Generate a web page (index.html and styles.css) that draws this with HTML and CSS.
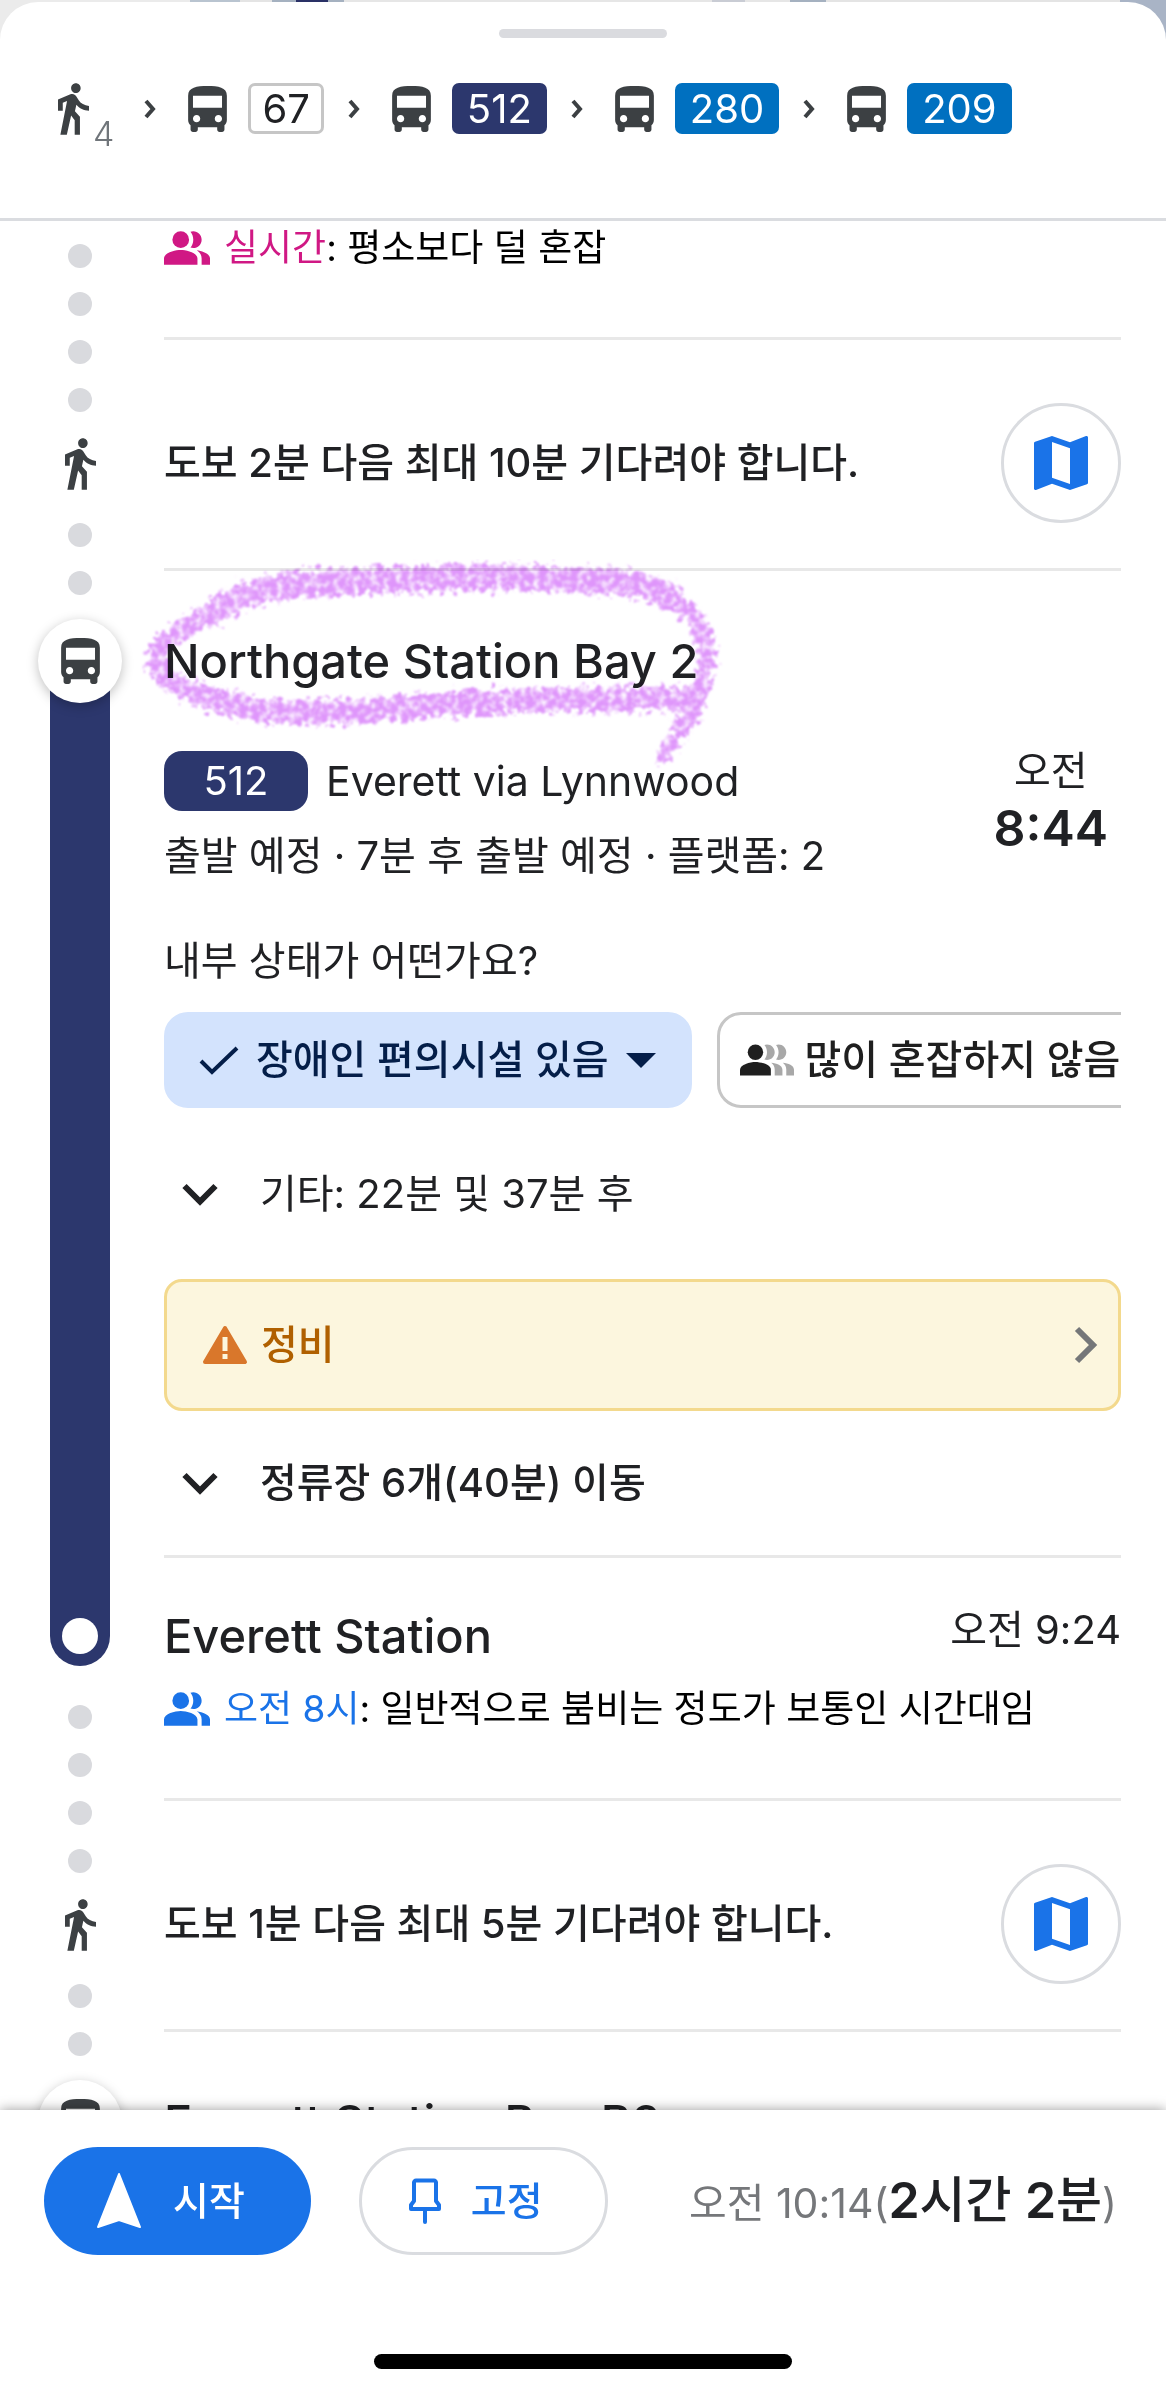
FILE: index.html
```html
<!DOCTYPE html>
<html lang="ko">
<head>
<meta charset="utf-8">
<meta name="viewport" content="width=device-width, initial-scale=1">
<title>대중교통 경로</title>
<link rel="stylesheet" href="styles.css">
</head>
<body>
<svg class="defs" aria-hidden="true">
  <symbol id="walk" viewBox="6 1.5 13 21.5"><path d="M13.5 5.5c1.1 0 2-.9 2-2s-.9-2-2-2-2 .9-2 2 .9 2 2 2zM9.8 8.9L7 23h2.7l1.8-8 1.5 2v6h2.2v-7.5l-2.1-2.3.6-2.7C15 12 16.8 13 19 13v-2c-1.9-.3-3.5-1-4.3-2.4l-1-1.6c-.4-.6-1-1-1.7-1-.3 0-.5.1-.8.1L6 8.3V13h2V9.6l1.8-.7"/></symbol>
  <symbol id="bus" viewBox="4 2 16 19"><path d="M4 16c0 .88.39 1.67 1 2.22V20c0 .55.45 1 1 1h1c.55 0 1-.45 1-1v-1h8v1c0 .55.45 1 1 1h1c.55 0 1-.45 1-1v-1.78c.61-.55 1-1.34 1-2.22V6c0-3.5-3.58-4-8-4s-8 .5-8 4v10zm3.5 1c-.83 0-1.5-.67-1.5-1.5S6.67 14 7.5 14s1.5.67 1.5 1.5S8.33 17 7.5 17zm9 0c-.83 0-1.5-.67-1.5-1.5s.67-1.5 1.5-1.5 1.5.67 1.5 1.5-.67 1.5-1.5 1.5zm1.5-6H6V6h12v5z"/></symbol>
  <symbol id="next" viewBox="0 0 12 20"><path d="M2 2l7 8-7 8" fill="none" stroke="currentColor" stroke-width="4"/></symbol>
  <symbol id="down" viewBox="0 0 36 24"><path d="M2.500 4L18 19.500 33.500 4" fill="none" stroke="currentColor" stroke-width="6"/></symbol>
  <symbol id="map" viewBox="3 3 18 18"><path d="M20.5 3l-.16.03L15 5.1 9 3 3.36 4.9c-.21.07-.36.25-.36.48V20.500c0 .28.22.5.5.5l.16-.03L9 18.900l6 2.100 5.640-1.900c.21-.07.36-.25.36-.48V3.500c0-.28-.22-.5-.5-.5zM15 19l-6-2.110V5l6 2.110V19z"/></symbol>
  <symbol id="people" viewBox="1 4 22 16"><circle cx="9" cy="8" r="4"/><path d="M9 13c-2.670 0-8 1.340-8 4v3h16v-3c0-2.660-5.330-4-8-4zM16.670 13.130C18.040 14.060 19 15.320 19 17v3h4v-3c0-2.180-3.570-3.470-6.330-3.870zM15 12c2.210 0 4-1.790 4-4s-1.790-4-4-4c-.47 0-.91.1-1.330.24C14.500 5.270 15 6.580 15 8s-.5 2.730-1.330 3.760c.42.14.86.24 1.330.24z"/></symbol>
</svg>

<div class="sheet">
  <header class="summary">
    <div class="handle"></div>
    <ol class="modes">
      <li class="mode"><svg class="icon-walk"><use href="#walk"/></svg><span class="minutes">4</span></li>
      <li class="mode"><svg class="icon-next"><use href="#next"/></svg><svg class="icon-bus"><use href="#bus"/></svg><span class="line outline">67</span></li>
      <li class="mode"><svg class="icon-next"><use href="#next"/></svg><svg class="icon-bus"><use href="#bus"/></svg><span class="line navy">512</span></li>
      <li class="mode"><svg class="icon-next"><use href="#next"/></svg><svg class="icon-bus"><use href="#bus"/></svg><span class="line blue">280</span></li>
      <li class="mode"><svg class="icon-next"><use href="#next"/></svg><svg class="icon-bus"><use href="#bus"/></svg><span class="line blue">209</span></li>
    </ol>
  </header>

  <main class="trip">
    <section class="leg walk-leg">
      <div class="rail dotted">
        <i class="dot"></i><i class="dot"></i><i class="dot"></i><i class="dot"></i>
        <svg class="icon-walk"><use href="#walk"/></svg>
        <i class="dot"></i><i class="dot"></i>
      </div>
      <div class="details">
        <p class="crowding"><svg class="icon-people live"><use href="#people"/></svg><span><span class="live">실시간</span>: 평소보다 덜 혼잡</span></p>
        <div class="walk-row">
          <p class="strong">도보 2분 다음 최대 10분 기다려야 합니다.</p>
          <button class="map-button" aria-label="지도"><svg class="icon-map"><use href="#map"/></svg></button>
        </div>
      </div>
    </section>

    <section class="leg">
      <div class="rail">
        <div class="stop-badge"><svg class="icon-bus"><use href="#bus"/></svg></div>
        <div class="track"><i class="track-end"></i></div>
      </div>
      <div class="details">
        <h2 class="stop departure-stop">Northgate Station Bay 2
          <svg class="scribble" viewBox="0 0 600 230" aria-hidden="true">
            <filter id="crayon" x="-5%" y="-10%" width="110%" height="120%">
              <feTurbulence type="fractalNoise" baseFrequency="0.16" numOctaves="3" seed="4" result="noise"/>
              <feDisplacementMap in="SourceGraphic" in2="noise" scale="22" xChannelSelector="R" yChannelSelector="G" result="rough"/>
              <feColorMatrix in="noise" type="matrix" values="0 0 0 0 0  0 0 0 0 0  0 0 0 0 0  0 0 0 -2.400 2" result="grain"/>
              <feComposite in="rough" in2="grain" operator="in"/>
              <feGaussianBlur stdDeviation="1"/>
            </filter>
            <g filter="url(#crayon)" fill="none" stroke="#df95fb" stroke-linecap="round" stroke-linejoin="round">
              <path stroke-width="20" d="M78 60C45 78 20 90 17 106C15 124 30 132 54 142"/>
              <path stroke-width="26" d="M78 60C105 40 150 34 199 32S340 25 393 28S500 28 528 46"/>
              <path stroke-width="18" d="M528 46C555 62 565 80 566 102C567 132 554 160 541 178"/>
              <path stroke-width="14" d="M541 178C534 190 528 198 524 207"/>
              <path stroke-width="24" d="M54 142C100 162 150 164 199 162S340 150 417 150S500 148 546 148"/>
            </g>
          </svg>
        </h2>
        <div class="departure">
          <div class="service">
            <p class="route"><span class="route-badge">512</span>Everett via Lynnwood</p>
            <p class="status">출발 예정 · 7분 후 출발 예정 · 플랫폼: 2</p>
          </div>
          <p class="time">오전<strong>8:44</strong></p>
        </div>
        <p class="question">내부 상태가 어떤가요?</p>
        <div class="chips">
          <button class="chip selected">
            <svg class="icon-check" viewBox="0 0 40 30"><path d="M2 16l11 11L38 3" fill="none" stroke="currentColor" stroke-width="4"/></svg>
            장애인 편의시설 있음
            <svg class="icon-caret" viewBox="0 0 30 15"><path d="M0 0h30L15 15z"/></svg>
          </button>
          <button class="chip">
            <svg class="icon-crowd" viewBox="1 4 28 16"><circle cx="9" cy="8" r="4"/><path d="M9 13c-2.670 0-8 1.340-8 4v3h16v-3c0-2.660-5.330-4-8-4z"/><g fill="#a8a8a8"><path id="behind" d="M17.200 13.400C18.400 14.300 19 15.500 19 17v3h4v-3c0-2.200-3-3.400-5.800-3.600zM15 12c2.210 0 4-1.790 4-4s-1.790-4-4-4c-.47 0-.91.1-1.330.24C14.500 5.270 15 6.580 15 8s-.5 2.730-1.330 3.760c.42.14.86.24 1.330.24z"/><use href="#behind" x="6"/></g></svg>
            많이 혼잡하지 않음
          </button>
        </div>
        <button class="expand others"><svg class="icon-down"><use href="#down"/></svg>기타: 22분 및 37분 후</button>
        <button class="alert">
          <svg class="icon-warning" viewBox="0 0 46 40"><path d="M23 3L43 37H3z" fill="#d9772b" stroke="#d9772b" stroke-width="4" stroke-linejoin="round"/><path d="M23 12v14M23 29v5" stroke="#fcf6de" stroke-width="5"/></svg>
          정비
          <svg class="icon-forward" viewBox="0 0 24 38"><path d="M3 3l16 16L3 35" fill="none" stroke="currentColor" stroke-width="6"/></svg>
        </button>
        <button class="expand stops strong"><svg class="icon-down"><use href="#down"/></svg>정류장 6개(40분) 이동</button>
        <div class="arrival">
          <h2 class="stop">Everett Station</h2>
          <p class="arrival-time">오전 9:24</p>
        </div>
      </div>
    </section>

    <section class="leg walk-leg">
      <div class="rail dotted">
        <i class="dot"></i><i class="dot"></i><i class="dot"></i><i class="dot"></i>
        <svg class="icon-walk"><use href="#walk"/></svg>
        <i class="dot"></i><i class="dot"></i>
      </div>
      <div class="details">
        <p class="crowding"><svg class="icon-people usual"><use href="#people"/></svg><span><span class="usual">오전 8시</span>: 일반적으로 붐비는 정도가 보통인 시간대임</span></p>
        <div class="walk-row">
          <p class="strong">도보 1분 다음 최대 5분 기다려야 합니다.</p>
          <button class="map-button" aria-label="지도"><svg class="icon-map"><use href="#map"/></svg></button>
        </div>
      </div>
    </section>

    <section class="leg">
      <div class="rail">
        <div class="stop-badge"><svg class="icon-bus"><use href="#bus"/></svg></div>
      </div>
      <div class="details"><h2 class="stop departure-stop">Everett Station Bay B2</h2></div>
    </section>
  </main>

  <footer class="actions">
    <div class="action-row">
      <button class="pill start"><svg class="icon-nav" viewBox="0 0 46 58"><path d="M23 2L44 55 23 48 2 55z" stroke="currentColor" stroke-width="2" stroke-linejoin="round"/></svg>시작</button>
      <button class="pill pin"><svg class="icon-pin" viewBox="0 0 32 46"><path d="M7 2.500h18c1 0 2 1 2 2V23l3 4v4H2v-4l3-4V4.500c0-1 1-2 2-2zM16 31v13" fill="none" stroke="currentColor" stroke-width="4" stroke-linejoin="round" stroke-linecap="round"/></svg>고정</button>
      <p class="eta">오전 10:14(<strong><b>2</b>시간 <b>2</b>분</strong>)</p>
    </div>
    <div class="home-indicator"></div>
  </footer>
</div>
</body>
</html>
```
FILE: styles.css
```css
* {
  box-sizing: border-box;
}

body {
  margin: 0;
  background:
    linear-gradient(to right, #ebebeb 190px, #b9c4d0 190px 240px, #e4e4e4 240px 272px, #a5b1c0 272px 296px, #2a3166 296px 328px, #a5b1c0 328px 344px, #e6e6e6 344px 712px, #c9ccd4 712px 745px, #e6e6e6 745px 790px, #a5b1c0 790px 826px, #e4e4e4 826px 1120px, #a9b4c6 1120px);
  color: #202124;
  font-family: Inter, "Noto Sans CJK KR", sans-serif;
  font-size: 40px;
  line-height: 60px;
}

h2,
p,
ol {
  margin: 0;
  padding: 0;
}

button {
  margin: 0;
  padding: 0;
  border: 0;
  background: none;
  color: inherit;
  font: inherit;
  text-align: left;
  display: flex;
  align-items: center;
}

svg {
  display: block;
  flex: none;
  fill: currentColor;
}

.defs {
  position: absolute;
  width: 0;
  height: 0;
}

.icon-walk { width: 31px; height: 52px; color: #3c4043; }
.icon-bus { width: 39px; height: 46px; color: #3c4043; }
.icon-next { width: 12px; height: 20px; color: #3c4043; }
.icon-down { width: 36px; height: 24px; }
.icon-people { width: 46px; height: 36px; }
.icon-map { width: 54px; height: 54px; }
.icon-check { width: 40px; height: 30px; }
.icon-caret { width: 30px; height: 15px; }
.icon-crowd { width: 54px; height: 32px; }
.icon-warning { width: 46px; height: 40px; }
.icon-forward { width: 24px; height: 38px; color: #757779; }
.icon-nav { width: 46px; height: 58px; }
.icon-pin { width: 32px; height: 46px; }

.sheet {
  height: 100vh;
  display: flex;
  flex-direction: column;
  overflow: hidden;
  padding-top: 2px;
}

.summary {
  flex: none;
  padding: 27px 0 84px;
  border-bottom: 3px solid #dadce0;
  border-radius: 38px 38px 0 0;
  background: #fff;
}

.handle {
  width: 168px;
  height: 9px;
  margin: 0 auto 45px;
  border-radius: 5px;
  background: #dadbdf;
}

.modes {
  display: flex;
  padding-left: 58px;
  list-style: none;
}

.mode {
  display: flex;
  align-items: center;
  height: 51px;
}

.minutes {
  align-self: flex-end;
  margin: 0 30px 0 4px;
  padding-top: 48px;
  color: #70757a;
  font-size: 34px;
  font-weight: 300;
  line-height: 0;
}

.mode:first-child {
  align-items: flex-start;
}

.icon-next + .icon-bus {
  margin: 0 21px 0 32px;
}

.line {
  height: 51px;
  margin-right: 24px;
  padding: 0 15px;
  border-radius: 7px;
  line-height: 51px;
}

.outline {
  padding: 0 11px;
  border: 3px solid #c6c6c6;
  line-height: 45px;
}

.navy { background: #2c376d; color: #fff; }
.blue { background: #0070c0; color: #fff; }

.trip {
  flex: 1;
  min-height: 0;
  overflow: hidden;
  background: #fff;
}

.leg {
  display: grid;
  grid-template-columns: 164px minmax(0, 1fr);
  padding-right: 45px;
}

.walk-leg {
  padding-bottom: 24px;
}

.rail {
  display: flex;
  flex-direction: column;
  align-items: center;
  width: 160px;
  padding-top: 24px;
}

.dotted {
  height: 350px;
  gap: 24px;
  padding-top: 23px;
}

.dotted .icon-walk {
  margin: 2px 0 9px;
}

.dot {
  flex: none;
  width: 24px;
  height: 24px;
  border-radius: 50%;
  background: #d9dade;
}

.stop-badge {
  z-index: 1;
  display: grid;
  place-items: center;
  width: 84px;
  height: 84px;
  margin-bottom: -42px;
  border-radius: 50%;
  background: #fff;
  box-shadow: 0 3px 12px rgba(0, 0, 0, 0.25);
}

.track {
  flex: 1;
  display: flex;
  align-items: flex-end;
  justify-content: center;
  width: 60px;
  margin-bottom: 16px;
  padding-bottom: 12px;
  border-radius: 0 0 30px 30px;
  background: #2c376d;
}

.track-end {
  width: 36px;
  height: 36px;
  border-radius: 50%;
  background: #fff;
}

.crowding {
  display: flex;
  align-items: center;
  gap: 14px;
  height: 116px;
  padding-bottom: 62px;
  color: #000;
  font-size: 37px;
}

.live { color: #d01884; }
.usual { color: #1a73e8; }

.walk-row {
  display: flex;
  align-items: center;
  justify-content: space-between;
  height: 234px;
  padding-top: 18px;
  border-top: 3px solid #e8e8e8;
  border-bottom: 3px solid #e8e8e8;
}

.strong {
  font-weight: 500;
}

.map-button {
  justify-content: center;
  width: 120px;
  height: 120px;
  border: 3px solid #dadce0;
  border-radius: 50%;
  color: #1a73e8;
}

.stop {
  font-size: 47px;
  font-weight: 500;
}

.departure-stop {
  position: relative;
  padding: 36px 0;
}

.scribble {
  position: absolute;
  left: -24px;
  top: -45px;
  width: 600px;
  height: 230px;
  mix-blend-mode: multiply;
}

.departure {
  display: flex;
  justify-content: space-between;
  padding: 24px 13px 0 0;
}

.route {
  display: flex;
  align-items: center;
  gap: 18px;
  font-size: 41px;
}

.route-badge {
  width: 144px;
  border-radius: 18px;
  background: #2c376d;
  color: #fff;
  font-size: 40px;
  text-align: center;
}

.status {
  margin-top: 15px;
}

.time {
  text-align: center;
  line-height: 40px;
}

.time strong {
  display: block;
  font-size: 50px;
  font-weight: 600;
  line-height: 74px;
}

.question {
  margin: 45px 0 21px;
}

.chips {
  display: flex;
  gap: 25px;
  overflow: hidden;
}

.chip {
  flex: none;
  gap: 11px;
  height: 96px;
  padding: 0 20px;
  border: 3px solid #c6c6c6;
  border-radius: 24px;
  color: #1f1f1f;
  font-weight: 500;
  white-space: nowrap;
}

.selected {
  gap: 17px;
  padding: 0 33px 0 32px;
  border-color: #d3e3fd;
  background: #d3e3fd;
  color: #041e49;
}

.expand {
  gap: 42px;
  width: 100%;
  padding-left: 18px;
}

.others { height: 171px; }
.stops { height: 144px; }

.alert {
  gap: 13px;
  width: 100%;
  height: 132px;
  padding: 0 20px 0 35px;
  border: 3px solid #f3d98d;
  border-radius: 18px;
  background: #fcf6de;
  color: #b06000;
  font-weight: 500;
}

.icon-forward {
  margin-left: auto;
}

.arrival {
  display: flex;
  justify-content: space-between;
  align-items: flex-start;
  height: 127px;
  padding-top: 32px;
  border-top: 3px solid #e8e8e8;
}

.arrival .stop {
  line-height: 92px;
}

.arrival-time {
  line-height: 80px;
}

.actions {
  z-index: 1;
  flex: none;
  padding: 37px 44px 24px;
  background: #fff;
  box-shadow: 0 0 12px rgba(0, 0, 0, 0.4);
}

.action-row {
  display: flex;
  align-items: center;
}

.pill {
  height: 108px;
  border-radius: 54px;
  font-size: 39px;
  font-weight: 500;
}

.start {
  gap: 31px;
  padding: 0 66px 0 52px;
  margin-right: 48px;
  background: #1a73e8;
  color: #fff;
}

.pin {
  gap: 30px;
  padding: 0 62px 0 47px;
  border: 3px solid #dadce0;
  color: #1a73e8;
}

.eta {
  margin-left: auto;
  margin-right: 5px;
  color: #75777a;
  font-size: 41px;
  white-space: nowrap;
}

.eta strong {
  color: #202124;
  font-size: 50px;
  font-weight: 500;
}

.eta b {
  font-weight: 600;
}

.home-indicator {
  width: 418px;
  height: 15px;
  margin: 99px auto 0;
  border-radius: 8px;
  background: #000;
}
```
